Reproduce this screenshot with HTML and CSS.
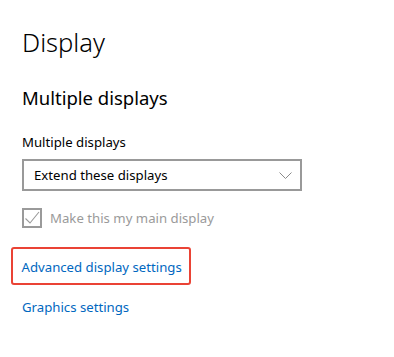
FILE: index.html
```html
<!DOCTYPE html>
<html>
<head>
<meta charset="utf-8">
<link rel="stylesheet" href="styles.css">
</head>
<body>
<main class="page">
  <h1 class="page-title">Display</h1>
  <h2 class="section-title">Multiple displays</h2>
  <div class="field-label">Multiple displays</div>
  <div class="select">
    <span class="select-value">Extend these displays</span>
    <svg class="chevron" width="13" height="7" viewBox="0 0 13 7"><path d="M0.5 0.5 L6.5 6.5 L12.5 0.5" fill="none" stroke="#8a8a8a" stroke-width="1"/></svg>
  </div>
  <label class="checkbox-row">
    <span class="checkbox">
      <svg width="16" height="16" viewBox="0 0 16 16"><path d="M1.5 8.5 L6 13 L15 2" fill="none" stroke="#9a9a9a" stroke-width="1.1"/></svg>
    </span>
    <span class="checkbox-text">Make this my main display</span>
  </label>
  <div class="highlight">
    <a class="link" href="#">Advanced display settings</a>
  </div>
  <a class="link link-plain" href="#">Graphics settings</a>
</main>
</body>
</html>
```
FILE: styles.css
```css
html, body {
  margin: 0;
  padding: 0;
  background: #ffffff;
}
.page {
  padding: 24px 0 0 22px;
  font-family: "Noto Sans", "Open Sans", sans-serif;
  color: #000;
}
.page-title {
  margin: 0;
  font-size: 25.5px;
  line-height: 36px;
  font-weight: 300;
}
.section-title {
  margin: 24px 0 0;
  font-size: 18.5px;
  line-height: 28px;
  font-weight: 400;
}
.field-label {
  margin-top: 20px;
  font-size: 13.2px;
  line-height: 20px;
}
.select {
  margin-top: 7px;
  width: 280px;
  height: 32px;
  box-sizing: border-box;
  border: 2px solid #999;
  display: flex;
  align-items: center;
  justify-content: space-between;
  padding: 0 8px 0 10px;
}
.select-value {
  font-size: 13.2px;
  line-height: 20px;
}
.chevron {
  display: block;
}
.checkbox-row {
  margin-top: 17px;
  display: flex;
  align-items: center;
  gap: 8px;
  height: 20px;
}
.checkbox {
  width: 20px;
  height: 20px;
  box-sizing: border-box;
  border: 2px solid #9a9a9a;
  display: flex;
  align-items: center;
  justify-content: center;
}
.checkbox svg {
  display: block;
}
.checkbox-text {
  font-size: 13.2px;
  line-height: 20px;
  color: #9a9a9a;
}
.highlight {
  margin: 19px 0 0 -11px;
  width: 180px;
  height: 38px;
  box-sizing: border-box;
  border: 2.5px solid #ea4335;
  border-radius: 3px;
  padding: 8px 0 0 8.5px;
}
.link {
  display: block;
  font-size: 13.2px;
  line-height: 20px;
  color: #0067c0;
  text-decoration: none;
}
.link-plain {
  margin-top: 12px;
}
```
